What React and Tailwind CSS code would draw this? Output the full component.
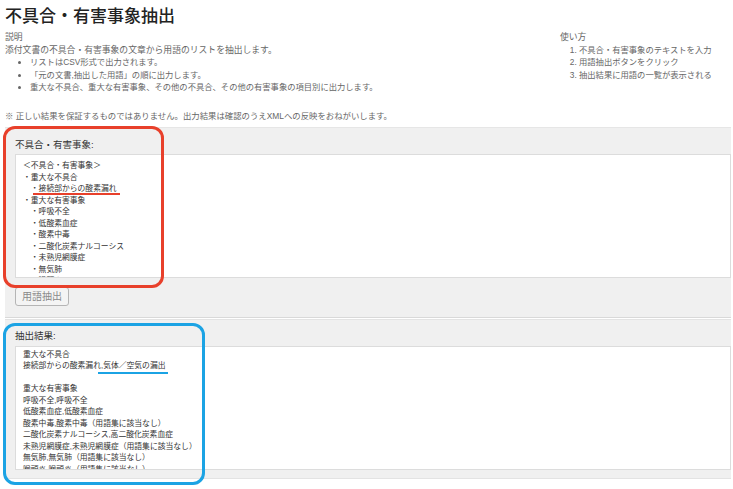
import React from 'react';

const inputText = `＜不具合・有害事象＞
・重大な不具合
　・接続部からの酸素漏れ
・重大な有害事象
　・呼吸不全
　・低酸素血症
　・酸素中毒
　・二酸化炭素ナルコーシス
　・未熟児網膜症
　・無気肺
　・喉頭炎
　・感染症`;

const resultText = `重大な不具合
接続部からの酸素漏れ,気体／空気の漏出

重大な有害事象
呼吸不全,呼吸不全
低酸素血症,低酸素血症
酸素中毒,酸素中毒（用語集に該当なし）
二酸化炭素ナルコーシス,高二酸化炭素血症
未熟児網膜症,未熟児網膜症（用語集に該当なし）
無気肺,無気肺（用語集に該当なし）
喉頭炎,喉頭炎（用語集に該当なし）
感染症,感染症（用語集に該当なし）`;

function App() {
    return (
        <div className="relative w-[733px] h-[489px] overflow-hidden bg-white font-['Liberation_Sans','Noto_Sans_CJK_JP',sans-serif]">
            <div className="px-[5px] pt-[5px]">
                <h1 className="text-[17px] leading-[24px] font-medium text-[#222]">不具合・有害事象抽出</h1>

                <div className="flex mt-[2px] text-[8.3px] leading-[12.5px] text-[#666]">
                    <div className="w-[555px]">
                        <p className="text-[8.8px]">説明</p>
                        <p className="text-[8.8px]">添付文書の不具合・有害事象の文章から用語のリストを抽出します。</p>
                        <ul className="list-disc pl-[25px]">
                            <li>リストはCSV形式で出力されます。</li>
                            <li>「元の文書,抽出した用語」の順に出力します。</li>
                            <li>重大な不具合、重大な有害事象、その他の不具合、その他の有害事象の項目別に出力します。</li>
                        </ul>
                    </div>
                    <div className="flex-1">
                        <p className="text-[8.8px]">使い方</p>
                        <ol className="list-decimal pl-[19px]">
                            <li>不具合・有害事象のテキストを入力</li>
                            <li>用語抽出ボタンをクリック</li>
                            <li>抽出結果に用語の一覧が表示される</li>
                        </ol>
                    </div>
                </div>

                <p className="mt-[16.5px] text-[8.4px] leading-[12.5px] text-[#666]">
                    ※ 正しい結果を保証するものではありません。出力結果は確認のうえXMLへの反映をおねがいします。
                </p>
            </div>

            <div className="ml-[5px] w-[726px] mt-[4.5px]">
                <div className="bg-[#f0f0f0] border-t border-[#e6e6e6] border-b border-b-[#d9d9d9] pl-[10px] pt-[9.5px] pb-[10px]">
                    <p className="text-[9.5px] leading-[13px] text-[#333]">不具合・有害事象:</p>
                    <textarea
                        readOnly
                        defaultValue={inputText}
                        className="block mt-[3.5px] w-full h-[124px] resize-none overflow-hidden bg-white border border-[#dcdcdc] px-[7px] py-[5px] text-[7.8px] leading-[11.5px] text-[#333] outline-none"
                    />
                    <button className="mt-[9px] h-[19px] px-[6px] bg-[#f4f4f4] border border-[#b5b5b5] rounded-[3px] text-[10px] leading-none text-[#8a8a8a]">
                        用語抽出
                    </button>
                </div>

                <div className="mt-[1px] bg-[#f0f0f0] border-t border-[#e3e3e3] border-b border-b-[#e3e3e3] pl-[10px] pt-[9.5px] pb-[8px]">
                    <p className="text-[9.5px] leading-[13px] text-[#333]">抽出結果:</p>
                    <textarea
                        readOnly
                        defaultValue={resultText}
                        className="block mt-[3.5px] w-full h-[124px] resize-none overflow-hidden bg-white border border-[#dcdcdc] px-[7px] py-[2px] text-[7.8px] leading-[11.5px] text-[#333] outline-none"
                    />
                </div>
            </div>

            {/* annotations */}
            <div className="absolute left-[3px] top-[126px] w-[161px] h-[162px] border-[3px] border-[#e8402b] rounded-[12px]" />
            <div className="absolute left-[33px] top-[193px] w-[87px] h-[2px] bg-[#e8402b]" />
            <div className="absolute left-[3px] top-[323px] w-[202px] h-[162px] border-[3px] border-[#1ba3e4] rounded-[12px]" />
            <div className="absolute left-[98px] top-[372px] w-[70px] h-[2px] bg-[#1ba3e4]" />
        </div>
    );
}

export default App;
